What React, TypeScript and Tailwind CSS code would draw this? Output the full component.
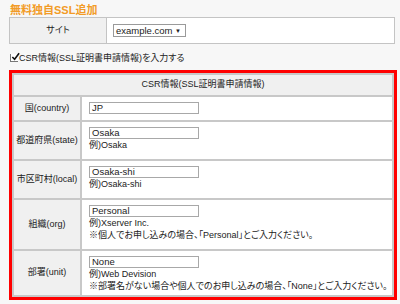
import React from 'react';

interface CsrRow {
  label: string;
  value: string;
  notes: string[];
  height: string;
}

const rows: CsrRow[] = [
  { label: '国(country)', value: 'JP', notes: [], height: 'h-[23px]' },
  { label: '都道府県(state)', value: 'Osaka', notes: ['例)Osaka'], height: 'h-[37px]' },
  { label: '市区町村(local)', value: 'Osaka-shi', notes: ['例)Osaka-shi'], height: 'h-[37px]' },
  {
    label: '組織(org)',
    value: 'Personal',
    notes: ['例)Xserver Inc.', '※個人でお申し込みの場合、「Personal」とご入力ください。'],
    height: 'h-[49px]',
  },
  {
    label: '部署(unit)',
    value: 'None',
    notes: ['例)Web Devision', '※部署名がない場合や個人でのお申し込みの場合、「None」とご入力ください。'],
    height: 'h-[44px]',
  },
];

export default function App() {
  return (
    <div className="w-[400px] h-[304px] bg-[#f7f7f7] text-[#222] overflow-hidden font-['Liberation_Sans','Noto_Sans_CJK_JP',sans-serif] [font-feature-settings:'palt']">
      {/* Title */}
      <h1 className="pl-[10px] pt-[3px] text-[11px] leading-[14px] font-bold text-[#f29b26]">無料独自SSL追加</h1>

      {/* Site select */}
      <div className="ml-[9px] w-[386px] h-[27px] border border-[#c4c4c4] flex">
        <div className="w-[97px] shrink-0 bg-[#f0f0f0] border-r border-[#c4c4c4] flex items-center justify-center text-[9px]">
          サイト
        </div>
        <div className="flex-1 bg-white flex items-center pl-[6px]">
          <div className="h-[13px] w-[73px] border border-[#9a9a9a] bg-white flex items-center justify-between pl-[2px] pr-[4px] text-[9.5px] leading-none">
            <span>example.com</span>
            <span className="text-[6px]">▼</span>
          </div>
        </div>
      </div>

      {/* Checkbox */}
      <div className="mt-[8px] pl-[10px] flex items-center h-[12px] text-[9px] leading-[12px]">
        <span className="w-[8px] h-[8px] border-l border-b border-[#777] bg-white relative mr-[1px]">
          <svg viewBox="0 0 10 10" className="absolute -top-[2px] left-0 w-[9px] h-[9px]">
            <path d="M1.5 5.5 L4 8 L9 1.5" fill="none" stroke="#111" strokeWidth="1.8" />
          </svg>
        </span>
        <span>CSR情報(SSL証明書申請情報)を入力する</span>
      </div>

      {/* CSR table */}
      <div className="mt-[6px] ml-[9px] w-[388px] border-[3px] border-[#ff0000] bg-white">
        <div className="border-2 border-b-0 border-[#c8c8c8]">
          <div className="h-[22px] bg-[#f0f0f0] border-b-2 border-[#c8c8c8] flex items-center justify-center text-[9px]">
            CSR情報(SSL証明書申請情報)
          </div>
          {rows.map(row => (
            <div key={row.label} className={`flex border-b-2 border-[#c8c8c8] ${row.height} box-content`}>
              <div className="w-[68px] shrink-0 bg-[#f0f0f0] border-r-2 border-[#c8c8c8] flex items-center justify-center text-[9px] whitespace-nowrap">
                {row.label}
              </div>
              <div className="flex-1 min-w-0 pl-[7px] pt-[5px] text-[9px] leading-[12px]">
                <div className="w-[110px] h-[12px] border border-[#a8a8a8] bg-white flex items-center pl-[2px] text-[9.5px] leading-none">
                  {row.value}
                </div>
                {row.notes.map(note => (
                  <div key={note} className="whitespace-nowrap">{note}</div>
                ))}
              </div>
            </div>
          ))}
        </div>
      </div>
    </div>
  );
}
